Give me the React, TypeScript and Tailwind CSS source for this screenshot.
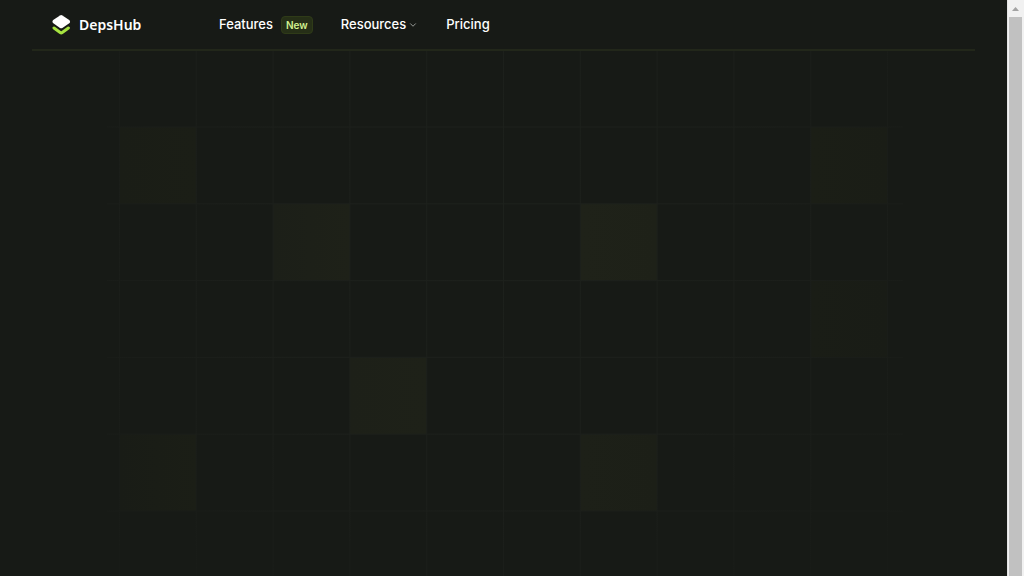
import { ChevronDown } from "lucide-react";

const CELL = 76.8;
const LEFT = 48.5;
const columns = Array.from({ length: 11 }, (_, i) => LEFT + i * CELL);
const rows = Array.from({ length: 6 }, (_, i) => (i + 1) * CELL - 0.8);

// column, row and colour of each highlighted square
const squares = [
  { col: 0, row: 1, from: "#1a1d16", to: "#1b1e16" },
  { col: 9, row: 1, from: "#1b1e16", to: "#1a1d16" },
  { col: 2, row: 2, from: "#1c1f18", to: "#1e2118" },
  { col: 6, row: 2, from: "#1f2219", to: "#1e2118" },
  { col: 9, row: 3, from: "#1a1d16", to: "#191c16" },
  { col: 3, row: 4, from: "#1d2018", to: "#1e2118" },
  { col: 0, row: 5, from: "#191c16", to: "#1b1e16" },
  { col: 6, row: 5, from: "#1d2018", to: "#1c1f17" },
];

const Logo = () => (
  <svg width="20" height="22" viewBox="0 0 20 22" fill="none" aria-hidden="true">
    <path
      d="M8 1.4Q9.2 .6 10.4 1.4L17.2 6Q18.7 7.3 17.6 9L10.4 13.9Q9.2 14.7 8 13.9L1 9Q-.2 7.3 1.2 6Z"
      fill="#fff"
    />
    <path
      d="M2 14L8.2 18.5Q9.2 19.2 10.2 18.5L16.4 14"
      stroke="#a6e340"
      strokeWidth="3"
      strokeLinecap="round"
      strokeLinejoin="round"
    />
  </svg>
);

const Header = () => (
  <header className="mx-8 flex h-[51px] items-center border-b-2 border-[#22271a] px-5">
    <a href="#" className="flex w-[167px] items-center gap-[7px]">
      <Logo />
      <span className="font-['Noto_Sans',sans-serif] text-sm leading-5 font-semibold">
        DepsHub
      </span>
    </a>
    <nav className="flex items-center text-[13px] font-medium">
      <a href="#" className="mr-7 flex items-center gap-2">
        Features
        <span className="rounded border border-[#2f3b18] bg-[#262f17] px-1 text-[10px] leading-4 font-semibold text-[#d2f18f]">
          New
        </span>
      </a>
      <button type="button" className="mr-7 flex items-center gap-[2px]">
        Resources
        <ChevronDown className="h-[10px] w-[10px] text-[#b0b2ae]" strokeWidth={2} />
      </button>
      <a href="#">Pricing</a>
    </nav>
  </header>
);

const Grid = () => (
  <svg width="865" height="525" viewBox="0 0 865 525" className="mx-auto block" aria-hidden="true">
    <defs>
      <radialGradient id="fade" gradientUnits="userSpaceOnUse" cx="432" cy="170" r="560">
        <stop offset="0" stopColor="#1d211c" />
        <stop offset="0.5" stopColor="#1c1f1b" />
        <stop offset="1" stopColor="#171a16" />
      </radialGradient>
      {squares.map(({ from, to }, i) => (
        <linearGradient key={i} id={`square-${i}`}>
          <stop stopColor={from} />
          <stop offset="1" stopColor={to} />
        </linearGradient>
      ))}
    </defs>
    {squares.map(({ col, row }, i) => (
      <rect
        key={i}
        x={LEFT + col * CELL}
        y={row * CELL - 0.8}
        width={CELL}
        height={CELL}
        fill={`url(#square-${i})`}
      />
    ))}
    <g stroke="url(#fade)">
      <path
        d={[
          ...columns.map((x) => `M${x} 0V525`),
          ...rows.map((y) => `M36 ${y}H832`),
        ].join("")}
      />
    </g>
  </svg>
);

const Scrollbar = () => (
  <div className="flex w-[17px] shrink-0 flex-col border-l border-[#e4e4e4] bg-[#f1f1f1]">
    <svg width="16" height="17" viewBox="0 0 16 17" className="shrink-0" aria-hidden="true">
      <path d="M4 11L7.5 7L11 11Z" fill="#a3a3a3" />
    </svg>
    <div className="mr-[2px] ml-px flex-1 bg-[#c1c1c1]" />
  </div>
);

const App = () => {
  return (
    <div className="flex h-screen overflow-hidden bg-[#171a16] font-['Inter',sans-serif] text-white">
      <div className="min-w-0 flex-1 overflow-hidden">
        <Header />
        <main>
          <Grid />
        </main>
      </div>
      <Scrollbar />
    </div>
  );
};

export default App;
